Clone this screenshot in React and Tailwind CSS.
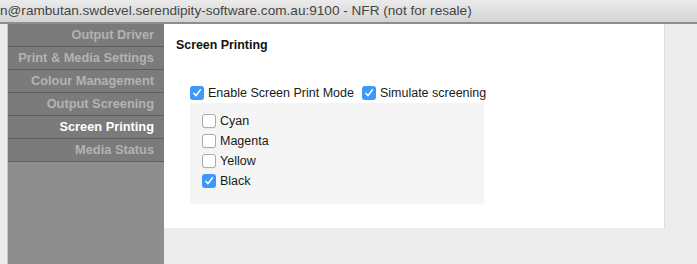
import React from 'react';

const navItems = [
  { label: 'Output Driver' },
  { label: 'Print & Media Settings' },
  { label: 'Colour Management' },
  { label: 'Output Screening' },
  { label: 'Screen Printing', active: true },
  { label: 'Media Status' },
];

const inks = [
  { label: 'Cyan', checked: false },
  { label: 'Magenta', checked: false },
  { label: 'Yellow', checked: false },
  { label: 'Black', checked: true },
];

const Checkbox = ({ checked }) =>
  checked ? (
    <span className="flex h-[14px] w-[14px] shrink-0 items-center justify-center rounded-[3px] bg-[#3b99fc]">
      <svg width="10" height="10" viewBox="0 0 10 10" fill="none">
        <path d="M1.8 5.2 L4 7.8 L8.4 1.8" stroke="white" strokeWidth="1.5" strokeLinecap="round" strokeLinejoin="round" />
      </svg>
    </span>
  ) : (
    <span className="h-[14px] w-[14px] shrink-0 rounded-[3px] border border-[#ababab] bg-white shadow-[0_0.5px_0.5px_rgba(0,0,0,0.1)]" />
  );

const CheckRow = ({ label, checked }) => (
  <label className="flex h-[20px] items-center gap-[4px] whitespace-nowrap text-[12.5px] text-[#1a1a1a]">
    <Checkbox checked={checked} />
    <span>{label}</span>
  </label>
);

const App = () => {
  return (
    <div
      className="flex h-[264px] w-[697px] flex-col overflow-hidden bg-[#ececec]"
      style={{ fontFamily: '"Liberation Sans", Arial, sans-serif' }}
    >
      {/* window title bar */}
      <div className="flex h-[24px] shrink-0 items-center overflow-hidden whitespace-nowrap border-b-2 border-[#8d8d8d] bg-gradient-to-b from-[#ebebeb] to-[#d4d4d4] text-[13.6px] text-[#454545]">
        <span>n@rambutan.swdevel.serendipity-software.com.au:9100 - NFR (not for resale)</span>
      </div>

      <div className="flex flex-1">
        <div className="w-[8px] shrink-0 border-r border-[#c9c9c9] bg-[#ececec]" />

        {/* side nav */}
        <div className="flex w-[156px] shrink-0 flex-col bg-[#8e8e8e]">
          {navItems.map((item) => (
            <div
              key={item.label}
              className={`flex h-[23px] items-center justify-end whitespace-nowrap border-b border-[#5f5f5f] bg-[#7b7b7b] pr-[10px] text-[12.8px] font-bold ${
                item.active ? 'text-white' : 'text-[#b3b3b3]'
              }`}
            >
              {item.label}
            </div>
          ))}
        </div>

        {/* content */}
        <div className="flex-1">
          <div className="h-[204px] w-[500px] bg-white pl-[12px] pt-[14px] shadow-[1px_0_0_#dedede]">
            <h2 className="text-[12.4px] font-bold leading-[15px] text-[#111]">Screen Printing</h2>

            <div className="ml-[14px] mt-[30px] w-[294px]">
              <div className="flex items-center gap-[8px]">
                <CheckRow label="Enable Screen Print Mode" checked />
                <CheckRow label="Simulate screening" checked />
              </div>
              <div className="h-[101px] bg-[#f5f5f5] pl-[12px] pt-[8px]">
                {inks.map((ink) => (
                  <CheckRow key={ink.label} label={ink.label} checked={ink.checked} />
                ))}
              </div>
            </div>
          </div>
        </div>
      </div>
    </div>
  );
};

export default App;
